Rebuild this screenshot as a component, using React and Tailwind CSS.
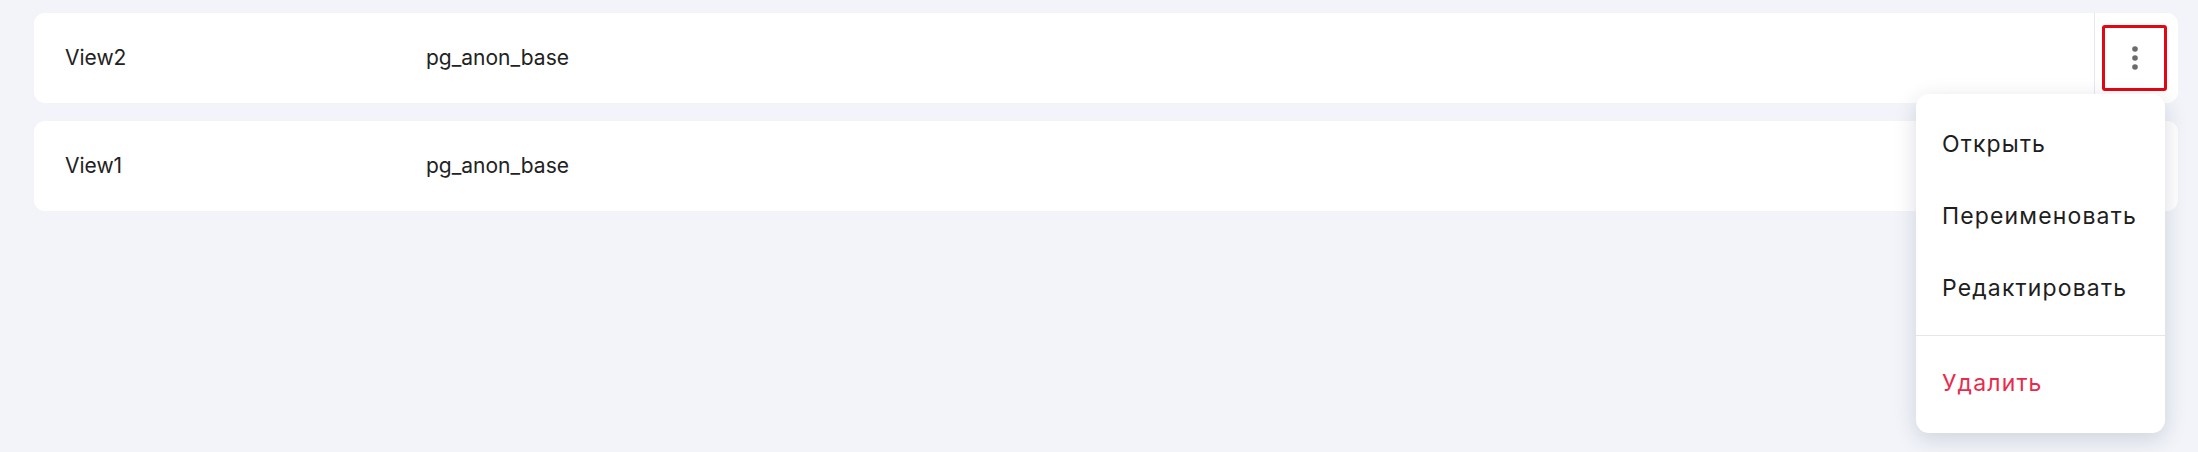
import React from "react";

function Dots() {
  return (
    <svg width="8" height="26" viewBox="0 0 8 26" className="block">
      <circle cx="4" cy="4" r="2.8" fill="#6b6b6b" />
      <circle cx="4" cy="13" r="2.8" fill="#6b6b6b" />
      <circle cx="4" cy="22" r="2.8" fill="#6b6b6b" />
    </svg>
  );
}

function Row({ name, db, active, children }) {
  return (
    <div className="relative flex h-[90px] items-stretch rounded-[11px] bg-white">
      <div className="flex flex-1 items-center pl-[31px]">
        <div className="w-[361px] text-[21px] text-[#222]">{name}</div>
        <div className="text-[21px] text-[#222]">{db}</div>
      </div>
      <div className="w-px bg-[#e6e8ee]" />
      <div className="flex items-center pl-[7px] pr-[11px]">
        <div
          className={
            active
              ? "flex h-[66px] w-[65px] items-center justify-center rounded-[3px] border-[3px] border-[#e30613]"
              : "flex h-[66px] w-[65px] items-center justify-center rounded-[3px] border-[3px] border-transparent"
          }
        >
          <Dots />
        </div>
      </div>
      {children}
    </div>
  );
}

function Item({ children, danger }) {
  return (
    <div
      className={
        danger
          ? "flex h-[72px] items-center pl-[26px] text-[23px] tracking-[0.05em] text-[#ea2a4c]"
          : "flex h-[72px] items-center pl-[26px] text-[23px] tracking-[0.05em] text-[#1e1e1e]"
      }
    >
      {children}
    </div>
  );
}

export default function App() {
  return (
    <div
      className="h-[452px] w-full bg-[#f2f4f9] pl-[34px] pr-[20px] pt-[13px]"
      style={{ fontFamily: "Inter, 'Noto Sans', sans-serif" }}
    >
      <div className="flex flex-col gap-[18px]">
        <div className="relative z-10">
          <Row name="View2" db="pg_anon_base" active>
            <div className="absolute right-[13px] top-[81px] w-[249px] rounded-[13px] bg-white pb-[14px] pt-[14px] shadow-[0_6px_22px_rgba(30,40,80,0.16)]">
              <Item>Открыть</Item>
              <Item>Переименовать</Item>
              <Item>Редактировать</Item>
              <div className="mb-[11px] mt-[11px] h-px bg-[#e4e6ea]" />
              <Item danger>Удалить</Item>
            </div>
          </Row>
        </div>
        <Row name="View1" db="pg_anon_base" />
      </div>
    </div>
  );
}
